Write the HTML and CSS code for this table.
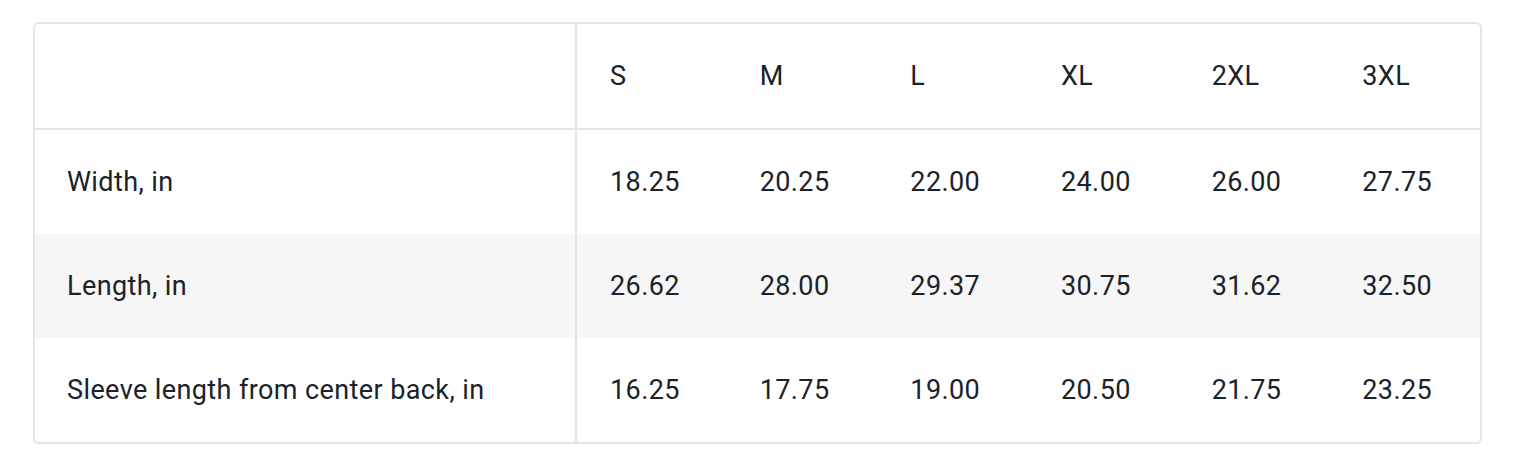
FILE: index.html
```html
<!DOCTYPE html>
<html>
<head>
<meta charset="utf-8">
<link rel="stylesheet" href="styles.css">
</head>
<body>
<div class="page">
  <div class="card">
    <table class="size-table">
      <thead>
        <tr>
          <th class="label"></th>
          <th>S</th><th>M</th><th>L</th><th>XL</th><th>2XL</th><th>3XL</th>
        </tr>
      </thead>
      <tbody>
        <tr>
          <td class="label">Width, in</td>
          <td>18.25</td><td>20.25</td><td>22.00</td><td>24.00</td><td>26.00</td><td>27.75</td>
        </tr>
        <tr class="alt">
          <td class="label">Length, in</td>
          <td>26.62</td><td>28.00</td><td>29.37</td><td>30.75</td><td>31.62</td><td>32.50</td>
        </tr>
        <tr>
          <td class="label">Sleeve length from center back, in</td>
          <td>16.25</td><td>17.75</td><td>19.00</td><td>20.50</td><td>21.75</td><td>23.25</td>
        </tr>
      </tbody>
    </table>
  </div>
</div>
</body>
</html>
```
FILE: styles.css
```css
html, body {
  margin: 0;
  padding: 0;
  background: #ffffff;
}
.page {
  padding: 22px 40px 0 33px;
}
.card {
  width: 1449px;
  border: 2px solid #e4e4e4;
  border-radius: 6px;
  overflow: hidden;
  box-sizing: border-box;
}
.size-table {
  width: 100%;
  border-collapse: collapse;
  table-layout: fixed;
  font-family: Roboto, "Liberation Sans", sans-serif;
  font-size: 27px;
  letter-spacing: 0.4px;
  color: #1b2329;
}
.size-table th,
.size-table td {
  text-align: left;
  font-weight: 400;
  padding: 0 0 0 33px;
  height: 104px;
  vertical-align: middle;
}
.size-table th {
  height: 104px;
  border-bottom: 2px solid #e4e4e4;
}
.size-table .label {
  width: 508px;
  padding-left: 32px;
  border-right: 2px solid #e4e4e4;
}
.size-table tr.alt td {
  background: #f6f6f6;
}
```
